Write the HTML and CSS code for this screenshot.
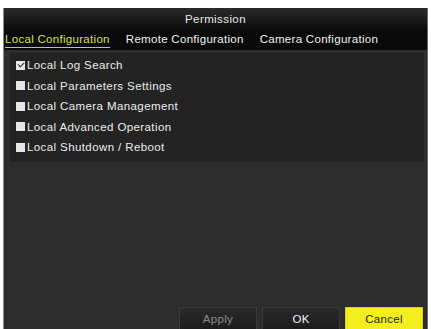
FILE: index.html
```html
<!DOCTYPE html>
<html lang="en">
<head>
    <meta charset="UTF-8">
    <title>Permission</title>
    <link rel="stylesheet" href="styles.css">
</head>
<body>
    <div class="dialog">
        <div class="title">Permission</div>
        <div class="tabs">
            <span class="tab active">Local Configuration</span>
            <span class="tab">Remote Configuration</span>
            <span class="tab">Camera Configuration</span>
        </div>
        <div class="body">
            <ul class="list">
                <li class="row"><span class="box checked"></span>Local Log Search</li>
                <li class="row"><span class="box"></span>Local Parameters Settings</li>
                <li class="row"><span class="box"></span>Local Camera Management</li>
                <li class="row"><span class="box"></span>Local Advanced Operation</li>
                <li class="row"><span class="box"></span>Local Shutdown / Reboot</li>
            </ul>
            <div class="buttons">
                <button class="btn disabled">Apply</button>
                <button class="btn">OK</button>
                <button class="btn cancel">Cancel</button>
            </div>
        </div>
    </div>
</body>
</html>
```

FILE: styles.css
```css
* {
    margin: 0;
    padding: 0;
    box-sizing: border-box;
}

body {
    background-color: #fff;
    font-family: "Liberation Sans", Arial, sans-serif;
    font-size: 11.5px;
    letter-spacing: 0.4px;
    padding: 8px 3px 0 3px;
    height: 329px;
    overflow: hidden;
}

.dialog {
    display: flex;
    flex-direction: column;
    height: 321px;
    background-color: #2d2d2d;
    border-left: 1px solid #8a8a8a;
    border-right: 1px solid #6a6a6a;
}

.title {
    height: 22px;
    line-height: 23px;
    text-align: center;
    color: #e8e8e8;
    background: linear-gradient(#2a2a2a, #0c0c0c);
}

.tabs {
    display: flex;
    gap: 16px;
    height: 20px;
    padding-left: 1px;
    background-color: #0a0a0a;
    color: #f0f0f0;
    letter-spacing: 0.3px;
}

.tab {
    line-height: 18px;
}

.tab.active {
    color: #d8e04a;
    border-bottom: 1px solid #c8d040;
    height: 18px;
}

.body {
    flex: 1;
    display: flex;
    flex-direction: column;
    padding: 3px 3px 0 6px;
}

.list {
    list-style: none;
    background-color: #232323;
    padding: 2px 0 4px 0;
}

.row {
    display: flex;
    align-items: center;
    height: 20.5px;
    padding-left: 6px;
    color: #ececec;
}

.box {
    width: 9px;
    height: 9px;
    margin-right: 2px;
    background-color: #e6e6e6;
}

.box.checked {
    position: relative;
}

.box.checked::after {
    content: "";
    position: absolute;
    left: 2px;
    top: 1px;
    width: 5px;
    height: 3px;
    border-left: 1.5px solid #333;
    border-bottom: 1.5px solid #333;
    transform: rotate(-45deg);
}

.buttons {
    margin-top: auto;
    display: flex;
    justify-content: flex-end;
    gap: 5px;
    padding-right: 1px;
}

.btn {
    width: 78px;
    height: 22px;
    border: 1px solid #3a3a3a;
    border-bottom: none;
    background: linear-gradient(#2a2a2a, #1c1c1c);
    color: #f2f2f2;
    font-family: "Liberation Sans", Arial, sans-serif;
    font-size: 11.5px;
    letter-spacing: 0.3px;
}

.btn.disabled {
    color: #8a8a8a;
}

.btn.cancel {
    background: #f4ee1c;
    color: #222;
    border-color: #d8d010;
}
```
